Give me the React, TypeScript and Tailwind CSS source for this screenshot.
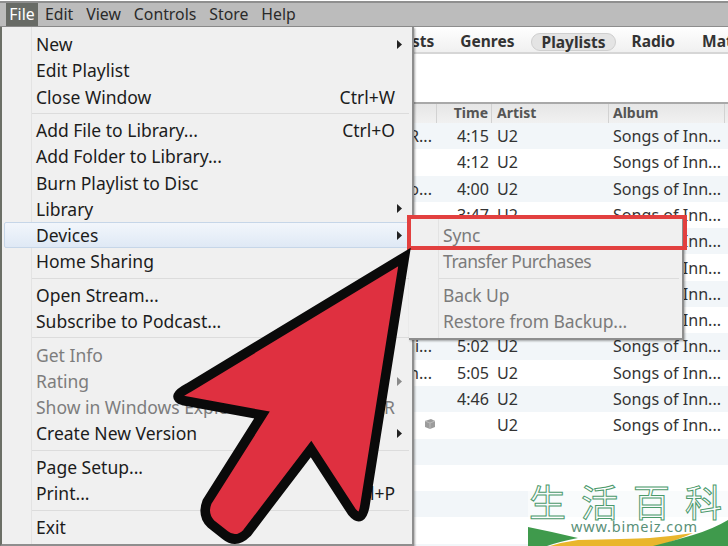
const FONT = "font-['Noto_Sans','Open_Sans',sans-serif]";

type Row = { name: string; time: string; long?: boolean };
const rows: Row[] = [
  { name: "The Miracle (Of Joey R...", time: "4:15", long: true },
  { name: "Every Wave", time: "4:12" },
  { name: "California (There Is No...", time: "4:00", long: true },
  { name: "For Someone", time: "3:47" },
  { name: "Iris", time: "5:19" },
  { name: "Volcano", time: "3:14" },
  { name: "Raised By Wolves", time: "4:06" },
  { name: "Cedarwood Road", time: "4:25" },
  { name: "Sleep Like a Baby Toni...", time: "5:02", long: true },
  { name: "This Is Where You Can...", time: "5:05", long: true },
  { name: "The Troubles", time: "4:46" },
  { name: "", time: "" },
];

function Tri({ dim }: { dim?: boolean }) {
  return (
    <svg width="5" height="9" viewBox="0 0 5 9" className="absolute right-[10px]">
      <path d="M0 0 L5 4.5 L0 9 Z" fill={dim ? "#8a8a8a" : "#222"} />
    </svg>
  );
}

function Item({ label, right, sub, disabled, hot, dimSub }: { label: string; right?: string; sub?: boolean; disabled?: boolean; hot?: boolean; dimSub?: boolean }) {
  return (
    <div className={`relative flex h-[26.25px] items-center justify-between pl-[34px] pr-[17px] ${disabled ? "text-[#7d7d7d]" : "text-[#1c1c1c]"}`}>
      {hot && <div className="absolute inset-x-[2px] inset-y-0 rounded-[2px] border border-[#c6d6e8] bg-gradient-to-b from-[#f2f6fb] to-[#dfe9f5]" />}
      <span className="relative">{label}</span>
      {right && <span className="relative">{right}</span>}
      {sub && <Tri dim={dimSub} />}
    </div>
  );
}

function Sep() {
  return (
    <div className="flex h-[7.3px] items-center pl-[29px] pr-[3px]">
      <div className="h-px w-full bg-[#dcdcdc]" />
    </div>
  );
}

function SubItem({ label, tight }: { label: string; tight?: boolean }) {
  return <div className={`flex h-[26.25px] items-center pl-[34px] text-[#7b7b7b] ${tight ? "tracking-[-0.45px]" : "tracking-[-0.1px]"}`}>{label}</div>;
}

export default function App() {
  return (
    <div className={`relative flex h-[546px] w-[728px] flex-col overflow-hidden bg-white ${FONT} text-[17.5px] text-[#333]`}>
      {/* window top */}
      <div className="h-[3px] shrink-0 border-b-2 border-[#8f8f8f] bg-white" />
      <div className="flex h-[24px] shrink-0 items-center border-b border-[#8d8d8d] bg-[#bcbcbc] pl-[6px] text-[15.8px] text-[#2a2a2a]">
        <div className="flex h-full w-[32px] items-center justify-center bg-[#686b66] pt-[1px] text-white">File</div>
        <div className="flex gap-[13px] pl-[7px] pt-[1px]">
          <span>Edit</span>
          <span>View</span>
          <span>Controls</span>
          <span>Store</span>
          <span>Help</span>
        </div>
      </div>
      {/* tabs */}
      <div className="flex h-[27px] shrink-0 items-center border-b-2 border-[#d6d6d6] bg-gradient-to-b from-white to-[#f0f0f0] pl-[383px] pt-[4px] text-[15.5px] font-bold text-[#333]">
        <span className="w-[60px] text-right">Artists</span>
        <span className="ml-[26px]">Genres</span>
        <span className="ml-[16px] rounded-full border border-[#cfcfcf] bg-[#e4e4e4] px-[10px] leading-[16px]">Playlists</span>
        <span className="ml-[15px]">Radio</span>
        <span className="ml-[27px] whitespace-nowrap">Match</span>
      </div>
      <div className="h-[48px] shrink-0 bg-white" />
      {/* body */}
      <div className="flex min-h-0 flex-1">
        <div className="w-[187px] shrink-0 border-r border-[#c9c9c9] bg-[#f4f6f8]" />
        <div className="min-w-0 flex-1 bg-white text-[16.1px]">
          <div className="flex h-[21px] items-center border-t-2 border-[#a9a9a9] bg-gradient-to-b from-[#e6e6e6] to-[#f1f1f1] text-[14px] font-bold text-[#555]">
            <div className="h-full w-[250px] border-r border-[#d2d2d2]" />
            <div className="flex h-full w-[55px] items-center justify-end border-r border-[#d2d2d2] pb-[2px] pr-[3px]">Time</div>
            <div className="flex h-full w-[117px] items-center border-r border-[#d2d2d2] pb-[2px] pl-[5px]">Artist</div>
            <div className="flex h-full w-[116px] items-center border-r border-[#d2d2d2] pb-[2px] pl-[4px]">Album</div>
          </div>
          {rows.map((r, i) => (
            <div key={i} className={`flex h-[26.3px] items-center ${i % 2 === 0 ? "bg-[#f2f6f9]" : "bg-white"}`}>
              <div className={`flex h-full w-[249px] items-center overflow-hidden whitespace-nowrap ${r.long ? "justify-end pr-[4px]" : "justify-end"}`}>
                {r.name ? (
                  r.long ? r.name : <span className="mr-[60px]">{r.name}</span>
                ) : (
                  <svg width="10" height="10" viewBox="0 0 10 10" className="mr-[1px] -mt-[3px]">
                    <path d="M0 2 L6 0 L10 2 L10 8 L5 10 L0 8 Z" fill="#9c9c9c" />
                    <path d="M0 2 L5 4 L10 2 M5 4 L5 10" stroke="#c4c4c4" strokeWidth="0.8" fill="none" />
                  </svg>
                )}
              </div>
              <div className="w-[53px] text-right">{r.time}</div>
              <div className="w-[124px] pl-[8px]">U2</div>
              <div className="whitespace-nowrap">Songs of Inn...</div>
            </div>
          ))}
          {[0, 1, 2, 3, 4].map((i) => (
            <div key={i} className={`h-[26.3px] ${i % 2 === 0 ? "bg-[#f2f6f9]" : "bg-white"}`} />
          ))}
        </div>
      </div>

      {/* File menu */}
      <div className="absolute left-0 top-[27px] w-[414px] border-b-2 border-l-2 border-r-2 border-b-[#8e8e8e] border-l-[#6b6f66] border-r-[#8e8e8e] bg-[#f0f0f0] py-[4px] shadow-[1px_1px_2px_rgba(0,0,0,0.35)]">
        <div className="absolute bottom-0 left-[29px] top-0 w-px bg-[#e3e3e3]" />
        <Item label="New" sub />
        <Item label="Edit Playlist" />
        <Item label="Close Window" right="Ctrl+W" />
        <Sep />
        <Item label="Add File to Library..." right="Ctrl+O" />
        <Item label="Add Folder to Library..." />
        <Item label="Burn Playlist to Disc" />
        <Item label="Library" sub />
        <Item label="Devices" sub hot />
        <Item label="Home Sharing" />
        <Sep />
        <Item label="Open Stream..." />
        <Item label="Subscribe to Podcast..." />
        <Sep />
        <Item label="Get Info" disabled />
        <Item label="Rating" disabled sub dimSub />
        <Item label="Show in Windows Explorer" right="Ctrl+R" disabled />
        <Item label="Create New Version" sub />
        <Sep />
        <Item label="Page Setup..." />
        <Item label="Print..." right="Ctrl+P" />
        <Sep />
        <Item label="Exit" />
      </div>

      {/* Devices submenu */}
      <div className="absolute left-[409px] top-[218px] w-[275px] border-b-2 border-r-2 border-[#8e8e8e] bg-[#f0f0f0] py-[4px] shadow-[1px_1px_2px_rgba(0,0,0,0.35)]">
        <div className="absolute bottom-0 left-[29px] top-0 w-px bg-[#e3e3e3]" />
        <SubItem label="Sync" />
        <SubItem label="Transfer Purchases" tight />
        <Sep />
        <SubItem label="Back Up" />
        <SubItem label="Restore from Backup..." />
      </div>

      {/* Highlight frame */}
      <div className="absolute left-[407px] top-[215px] h-[35px] w-[280px] border-[4.5px] border-[#e2403f]" />

      {/* Arrow */}
      <svg width="728" height="546" viewBox="0 0 728 546" className="absolute left-0 top-0">
        <path
          d="M404.5 257 L188 388 Q171 397 183 400.5 L262 415 L207 502 Q202 515 211 524 L225 535 Q236 544 247 533 L311 449 L352 512 Q362 524 365 505 Z"
          fill="#df3040"
          stroke="#0a0a0a"
          strokeWidth="9.5"
          strokeLinejoin="miter"
          strokeMiterlimit="10"
        />
      </svg>

      {/* Watermark */}
      <div className="absolute bottom-0 right-0 h-[64px] w-[200px] overflow-hidden bg-white/50">
        <svg width="200" height="64" viewBox="0 0 200 64" className="absolute left-0 top-0">
          <path d="M0 45 Q25 50 50 56 Q30 60 19 64 L0 64 Z" fill="#3f9a4c" />
          <path d="M22 64 Q35 60 50 58 Q100 57 122 56 Q145 54 165 51 Q150 58 129 64 Z" fill="#e9b62c" />
          <path d="M125 64 Q145 59 165 53 Q185 47 200 38 L200 64 Z" fill="#3f9a4c" />
        </svg>
        <div className="absolute left-[1px] top-[1px] flex gap-[15px] whitespace-nowrap text-[37px] leading-[36px] text-transparent font-['Noto_Sans_CJK_SC',sans-serif] [-webkit-text-stroke:1px_#4c9a6c]">
          <span>生</span>
          <span>活</span>
          <span>百</span>
          <span>科</span>
        </div>
        <div className="absolute left-[43px] top-[34px] whitespace-nowrap text-[14.5px] tracking-[0.8px] text-[#5a9078]">
          www.bimeiz.com
        </div>
      </div>
    </div>
  );
}
